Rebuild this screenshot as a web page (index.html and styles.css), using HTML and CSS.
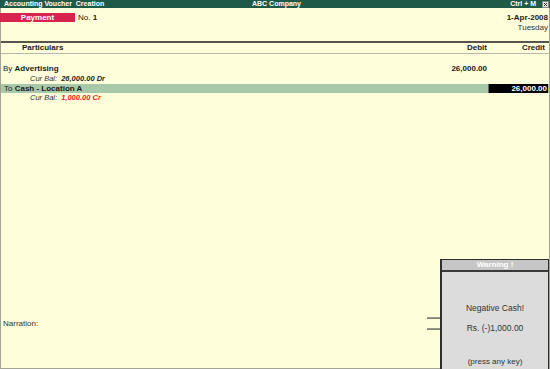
FILE: index.html
```html
<!DOCTYPE html>
<html lang="en">
<head>
    <meta charset="UTF-8">
    <title>Accounting Voucher Creation</title>
    <link rel="stylesheet" href="styles.css">
</head>
<body>
    <div class="title-bar">
        <span class="title-left">Accounting Voucher&nbsp; Creation</span>
        <span class="title-center">ABC Company</span>
        <span class="title-right">
            Ctrl + M
            <svg class="close-icon" width="7" height="7" viewBox="0 0 7 7">
                <rect x="0.5" y="0.5" width="6" height="6" fill="#e4e4dc" stroke="#8a8a80"/>
                <path d="M2 2 L5 5 M5 2 L2 5" stroke="#333" stroke-width="1"/>
            </svg>
        </span>
    </div>

    <div class="screen">
        <div class="voucher-head">
            <div class="voucher-type">
                <div class="type-box">Payment</div>
                <div class="voucher-no">No. <b>1</b></div>
            </div>
            <div class="voucher-date">
                <div class="date">1-Apr-2008</div>
                <div class="day">Tuesday</div>
            </div>
        </div>

        <div class="columns">
            <div class="col-particulars">Particulars</div>
            <div class="col-debit">Debit</div>
            <div class="col-credit">Credit</div>
        </div>

        <div class="entries">
            <div class="entry">
                <div class="ledger">By <b>Advertising</b></div>
                <div class="amount-dr">26,000.00</div>
                <div class="amount-cr"></div>
            </div>
            <div class="cur-bal">Cur Bal: <b>26,000.00 Dr</b></div>

            <div class="entry active">
                <div class="ledger">To <b>Cash - Location A</b></div>
                <div class="amount-dr"></div>
                <div class="amount-cr"><span class="edit-cell">26,000.00</span></div>
            </div>
            <div class="cur-bal negative">Cur Bal: <b>1,000.00 Cr</b></div>
        </div>

        <div class="narration">Narration:</div>
    </div>

    <div class="dash dash-top"></div>
    <div class="dash dash-bottom"></div>

    <div class="warning">
        <div class="warning-title">Warning !</div>
        <div class="warning-body">
            <div class="warning-msg">Negative Cash!</div>
            <div class="warning-amt">Rs. (-)1,000.00</div>
            <div class="warning-hint">(press any key)</div>
        </div>
    </div>
</body>
</html>
```

FILE: styles.css
```css
* {
    margin: 0;
    padding: 0;
    box-sizing: border-box;
}

body {
    width: 550px;
    height: 369px;
    overflow: hidden;
    position: relative;
    font-family: 'Liberation Sans', Arial, sans-serif;
    font-size: 8px;
    color: #1a1a1a;
    background: #fffedb;
}

.title-bar {
    height: 8px;
    display: grid;
    grid-template-columns: 1fr auto 1fr;
    align-items: center;
    padding: 0 1px 0 4px;
    background: #1f5a48;
    color: #fff;
    font-size: 7px;
    font-weight: bold;
    line-height: 8px;
    white-space: nowrap;
}

.title-right {
    display: flex;
    justify-content: flex-end;
    align-items: center;
    gap: 6px;
}

.close-icon {
    display: block;
}

.screen {
    height: 361px;
    display: flex;
    flex-direction: column;
    background: #fffedb;
    border-left: 1px solid #a4a494;
    border-right: 1px solid #a4a494;
    border-bottom: 1px solid #a4a494;
}

.voucher-head {
    height: 35px;
    display: flex;
    justify-content: space-between;
    padding-top: 5px;
    border-bottom: 2px solid #55554b;
}

.voucher-type {
    display: flex;
    align-items: flex-start;
}

.type-box {
    width: 75px;
    height: 9px;
    line-height: 9px;
    margin-left: -1px;
    background: #d7244f;
    color: #fff;
    font-weight: bold;
    text-align: center;
}

.voucher-no {
    margin-left: 3px;
    line-height: 9px;
}

.voucher-date {
    text-align: right;
    padding-right: 1px;
    line-height: 10px;
}

.date {
    font-weight: bold;
}

.day {
    color: #333;
}

.columns {
    display: grid;
    grid-template-columns: 1fr 60px 60px;
    height: 11px;
    line-height: 10px;
    padding-right: 1px;
    font-weight: bold;
    border-bottom: 1px solid #b8b8a8;
}

.col-particulars {
    padding-left: 21px;
}

.col-debit {
    text-align: right;
    padding-right: 1px;
}

.col-credit {
    text-align: right;
    padding-right: 3px;
}

.entries {
    margin-top: 10px;
}

.entry {
    display: grid;
    grid-template-columns: 1fr 60px 60px;
    line-height: 10px;
    padding-right: 1px;
}

.ledger {
    padding-left: 2px;
}

.amount-dr {
    text-align: right;
    padding-right: 1px;
    font-weight: bold;
}

.amount-cr {
    text-align: right;
}

.entry.active {
    line-height: 9px;
    background: #a8c9a9;
}

.entry.active .ledger {
    padding-left: 3px;
}

.edit-cell {
    display: block;
    background: #000;
    color: #fff;
    font-weight: bold;
    padding-right: 1px;
    border-left: 1px solid #666;
}

.cur-bal {
    padding-left: 29px;
    line-height: 10px;
    font-style: italic;
    font-size: 7.5px;
    color: #333;
}

.cur-bal b {
    color: #1a1a1a;
    padding-left: 2px;
}

.cur-bal.negative {
    line-height: 9px;
}

.cur-bal.negative b {
    color: #ee1c1c;
}

.narration {
    margin-top: auto;
    padding: 0 0 39px 2px;
    line-height: 10px;
    color: #333;
}

.dash {
    position: absolute;
    left: 427px;
    width: 13px;
    height: 2px;
    background: linear-gradient(#a8a898, #707064);
}

.dash-top {
    top: 317px;
}

.dash-bottom {
    top: 328px;
}

.warning {
    position: absolute;
    left: 440px;
    top: 259px;
    width: 109px;
    height: 120px;
    border: 1px solid #2e2e2e;
    border-left-width: 2px;
    background: #dcdcdc;
}

.warning-title {
    height: 12px;
    line-height: 10px;
    background: #c6c6c6;
    border-bottom: 2px solid #3a3a3a;
    color: #fff;
    font-weight: bold;
    text-align: center;
}

.warning-body {
    display: flex;
    flex-direction: column;
    align-items: center;
    line-height: 10px;
    color: #333;
    font-size: 8.5px;
}

.warning-msg {
    margin-top: 31px;
}

.warning-amt {
    margin-top: 10px;
}

.warning-hint {
    margin-top: 24px;
    font-size: 8px;
}
```
